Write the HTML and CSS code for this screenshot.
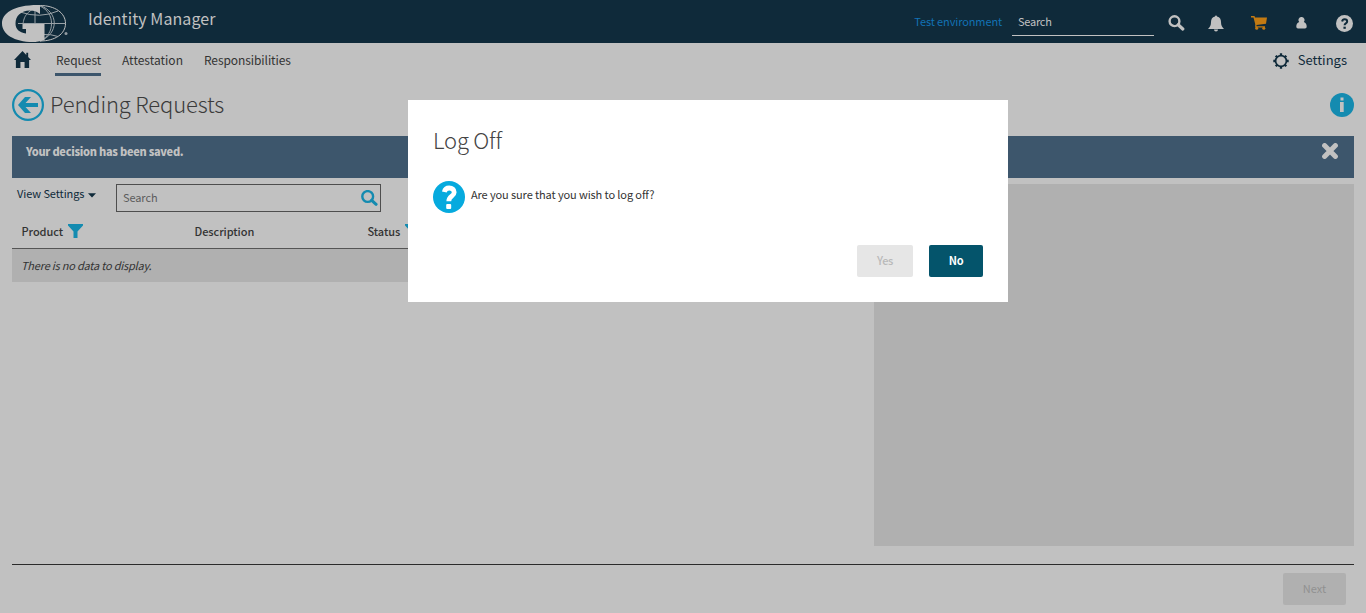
FILE: index.html
```html
<!DOCTYPE html>
<html lang="en">
<head>
<meta charset="utf-8">
<title>Identity Manager</title>
<link rel="stylesheet" href="styles.css">
</head>
<body>
<header class="topbar">
  <svg class="logo" viewBox="0 0 70 43" width="70" height="43">
    <g fill="none" stroke="#9aa2a7" stroke-width="1">
      <path stroke="#c1c1c1" d="M40 5.500C55 5.500 65.500 13 65.500 23.500S55 41 40 41"/>
      <path d="M40 6C48 10 51.500 16 51.500 23.500S48 37 40 41"/>
      <path d="M40 5.500C59 12 59 34 40 41"/>
      <path d="M40 6C26 11 24 17 23 24"/>
      <path d="M35 5v20M18 23.500h48M20 12q20 7 38-1M43 34.500q8-.5 15 2"/>
    </g>
    <path fill="#c1c1c1" d="M40 5v9C37 11.500 34 10.500 30 10.500C21 10.500 15.500 16 15.500 23.500C15.500 29 19 32.500 26 33.500V29H22.500V24H44.500V40C40 41.500 36 42 33 42C14 42 2 34 2 23.500S14 4.500 40 5Z"/>
    <circle cx="66" cy="33.500" r="1.500" fill="#939ca2"/>
  </svg>
  <h1 class="product">Identity Manager</h1>
  <span class="env">Test environment</span>
  <div class="top-search">Search</div>
  <div class="top-icons">
    <svg class="i-search" width="17" height="16" viewBox="0 0 17 16"><circle cx="6.500" cy="6.200" r="4.900" fill="none" stroke="#c1c1c1" stroke-width="2.400"/><path d="M10.200 9.800l4.600 4.200" stroke="#c1c1c1" stroke-width="3.200" stroke-linecap="round"/></svg>
    <svg class="i-bell" width="16" height="17" viewBox="0 0 16 17"><path fill="#c1c1c1" d="M7 1.500a1 1 0 0 1 2 0C12 2 13 4.500 13 7c0 3.500 1 5 3 7H0c2-2 3-3.500 3-7 0-2.500 1-5 4-5.500ZM6 14.500h4a2 2 0 0 1-4 0Z"/></svg>
    <svg class="i-cart" width="16" height="14" viewBox="0 0 16 14"><path fill="#c37a12" d="M0 0h3.500l.5 1.500h12L15 7.800 5.500 9v1.200H14v1.300H4.200V8L2.500 1.500H0Z"/><circle cx="5.700" cy="12.300" r="1.500" fill="#c37a12"/><circle cx="12.800" cy="12.300" r="1.500" fill="#c37a12"/></svg>
    <svg class="i-user" width="11" height="12" viewBox="0 0 11 12"><path fill="#c1c1c1" d="M5.500 0a2.900 3 0 0 1 2.300 5c2 .6 2.900 2.500 2.900 4.600 0 1.200-.7 1.900-1.700 1.900H2c-1 0-1.700-.7-1.700-1.900 0-2.100.9-4 2.900-4.600A2.900 3 0 0 1 5.500 0Z"/></svg>
    <svg width="17" height="17" viewBox="0 0 32 32"><circle cx="16" cy="16" r="16" fill="#c1c1c1"/><path d="M11.500 12.200C12 9.500 13.500 8 16.200 8c3 0 4.800 1.700 4.800 4.100 0 4-4.800 3.400-4.800 7" fill="none" stroke="#0f2a3a" stroke-width="3.800"/><path fill="#0f2a3a" d="M14 22h4.400v4H14z"/></svg>
  </div>
</header>
<nav class="menu">
  <svg class="home" width="17" height="17" viewBox="0 0 18 17" preserveAspectRatio="none"><path fill="#0f2a3a" d="M9 0l4 4V1.800h2V6l3 3h-2v8h-4.800v-6H6.800v6H2V9H0Z"/></svg>
  <a class="tab tab-request active">Request</a>
  <a class="tab tab-attest">Attestation</a>
  <a class="tab tab-resp">Responsibilities</a>
  <div class="settings">
    <svg width="16" height="16" viewBox="0 0 16 16"><circle cx="8" cy="8" r="5.400" fill="none" stroke="#0f2a3a" stroke-width="1.700"/><path d="M8 .3v2.500M8 13.200v2.500M.3 8h2.500M13.200 8h2.500M2.700 2.700l1.600 1.600M11.700 11.700l1.600 1.600M13.300 2.700l-1.600 1.600M4.300 11.700l-1.600 1.600" stroke="#0f2a3a" stroke-width="2.300"/></svg>
    <span>Settings</span>
  </div>
</nav>
<main class="page">
  <div class="heading">
    <svg width="32" height="32" viewBox="0 0 32 32"><circle cx="16" cy="16" r="14.900" fill="none" stroke="#148bb0" stroke-width="2.200"/><path fill="#148bb0" d="M6 16l7-8h6l-5.500 6H26v4H13.500l5.500 6h-6Z"/></svg>
    <h2>Pending Requests</h2>
    <svg class="info" width="24" height="24" viewBox="0 0 24 24"><circle cx="12" cy="12" r="12" fill="#148bb0"/><path fill="#c1c1c1" d="M10.500 4.500h3v3h-3zM10 9h3.700v10H10z"/></svg>
  </div>
  <div class="banner">
    <span>Your decision has been saved.</span>
    <svg width="16" height="16" viewBox="0 0 16 16"><path d="M2.600 2.600l10.800 10.800M13.400 2.600l-10.800 10.800" stroke="#c1c1c1" stroke-width="5" stroke-linecap="round"/></svg>
  </div>
  <div class="content">
    <section class="list">
      <div class="tools">
        <span class="view">View Settings</span>
        <svg class="caret" width="8" height="5" viewBox="0 0 8 5"><path fill="#0f2a3a" d="M0 .3h8L4 4.600Z"/></svg>
        <div class="search">
          <span>Search</span>
          <svg width="17" height="16" viewBox="0 0 17 16"><circle cx="6.700" cy="6.500" r="5.400" fill="none" stroke="#148bb0" stroke-width="2.400"/><path d="M10.700 10.300l4.400 4" stroke="#148bb0" stroke-width="3" stroke-linecap="round"/></svg>
        </div>
      </div>
      <div class="columns">
        <div class="col"><span>Product</span><svg width="15" height="14" viewBox="0 0 15 14"><path fill="#148bb0" d="M0 0h15v1.500L9.500 7.500V14h-4V7.500L0 1.500Z"/></svg></div>
        <div class="col"><span>Description</span></div>
        <div class="col"><span>Status</span><svg width="15" height="14" viewBox="0 0 15 14"><path fill="#148bb0" d="M0 0h15v1.500L9.500 7.500V14h-4V7.500L0 1.500Z"/></svg></div>
      </div>
      <div class="empty"><em>There is no data to display.</em></div>
    </section>
    <aside class="detail"></aside>
  </div>
  <footer class="footer"><div class="btn next"><span>Next</span></div></footer>
</main>
<div class="dialog">
  <h3>Log Off</h3>
  <div class="question">
    <svg width="32" height="32" viewBox="0 0 32 32"><circle cx="16" cy="16" r="16" fill="#06aade"/><path d="M11.300 11C12 8 13.500 7 16.200 7c3 0 5 1.700 5 4.300 0 4.200-5.400 3.700-5.400 8.900" fill="none" stroke="#fff" stroke-width="4.800"/><rect x="13.200" y="23" width="5" height="5" rx="1" fill="#fff"/></svg>
    <span>Are you sure that you wish to log off?</span>
  </div>
  <div class="actions">
    <div class="btn yes"><span>Yes</span></div>
    <div class="btn no"><span>No</span></div>
  </div>
</div>
</body>
</html>
```
FILE: styles.css
```css
* { box-sizing: border-box; }
body { margin: 0; height: 613px; overflow: hidden; background: #c1c1c1; color: #333; font: 11px/18px "Noto Sans CJK SC", "Noto Sans", sans-serif; white-space: nowrap; }
svg { display: block; flex: none; }
h1, h2, h3 { margin: 0; font-weight: 400; }
.topbar { height: 43px; display: flex; align-items: flex-start; background: #0f2a3a; color: #c1c1c1; }
.logo { margin-right: 18px; }
.product { font-size: 16px; line-height: 36px; letter-spacing: .08px; }
.env { margin-left: auto; line-height: 43px; color: #1272b5; letter-spacing: -.12px; }
.top-search { width: 142px; height: 36px; margin-left: 10px; padding-left: 6px; border-bottom: 1px solid #c1c1c1; line-height: 43px; letter-spacing: -.25px; }
.top-icons { height: 46px; width: 212px; padding: 0 13px 0 14px; display: flex; align-items: center; }
.i-search { margin: 0 23px 1px 0; }
.i-bell { margin-right: 27px; }
.i-cart { margin-right: 29px; }
.i-user { margin-right: auto; }
.menu { height: 39px; display: flex; align-items: flex-start; padding: 8px 19px 0 14px; font-size: 12px; }
.home { margin-right: 24px; }
.tab { height: 25px; line-height: 18px; }
.active { border-bottom: 3px solid #3d566c; }
.tab-request { width: 46px; padding-left: 1px; margin-right: 21px; }
.tab-attest { margin-right: 21px; }
.tab-resp { letter-spacing: -.08px; }
.settings { margin-left: auto; display: flex; align-items: flex-start; gap: 9px; color: #0f2a3a; font-size: 13px; line-height: 17px; }
.settings svg { margin-top: 2px; }
.page { padding: 0 12px; }
.heading { height: 54px; display: flex; align-items: flex-start; padding-top: 7px; }
.heading h2 { margin-left: 6px; font-size: 22px; line-height: 29px; font-weight: 200; letter-spacing: -.15px; color: #3b3b3b; }
.info { margin: 4px 0 0 auto; }
.banner { height: 42px; display: flex; justify-content: space-between; padding: 7px 16px 0 14px; background: #3d566c; color: #c1c1c1; font-weight: 900; line-height: 16px; letter-spacing: -.28px; }
.content { display: flex; justify-content: space-between; height: 386px; }
.list { width: 862px; }
.tools { height: 39px; display: flex; padding: 6px 0 0 5px; }
.view { width: 67px; color: #0f2a3a; letter-spacing: -.08px; }
.caret { margin: 9px 20px 0 4px; }
.search { display: flex; width: 265px; height: 28px; border: 1px solid #4e4e4e; padding: 0 2px 0 6px; align-items: center; justify-content: space-between; color: #5c5c5c; }
.search span { padding-bottom: 2px; letter-spacing: -.1px; }
.columns { height: 32px; border-bottom: 1px solid #555; display: grid; grid-template-columns: 173px 173px 1fr; padding: 7px 0 0 9.500px; }
.col { display: flex; font-weight: 500; line-height: 14px; gap: 5px; letter-spacing: -.06px; }
.empty { height: 33px; padding-left: 9px; background: #b0b0b0; line-height: 32px; letter-spacing: -.22px; }
.detail { width: 480px; height: 362px; margin-top: 6px; background: #b0b0b0; }
.footer { height: 49px; border-top: 1px solid #2b2b2b; padding: 8px 8px 0; display: flex; justify-content: flex-end; }
.btn { height: 32px; border-radius: 2px; text-align: center; line-height: 30px; }
.next { width: 63px; background: #b0b0b0; color: #909090; }
.dialog { position: absolute; left: 408px; top: 100px; width: 600px; height: 202px; padding: 25px; background: #fff; color: #333; }
.dialog h3 { font-size: 22px; line-height: 29px; font-weight: 200; letter-spacing: -.2px; color: #444; }
.question { display: flex; gap: 6px; margin-top: 27px; line-height: 26px; letter-spacing: -.11px; }
.actions { display: flex; justify-content: flex-end; gap: 16px; margin-top: 32px; letter-spacing: -.3px; }
.yes { width: 56px; background: #e6e6e6; color: #b9b9b9; font-weight: 500; }
.no { width: 54px; background: #04546b; color: #fff; font-weight: 700; }
```
